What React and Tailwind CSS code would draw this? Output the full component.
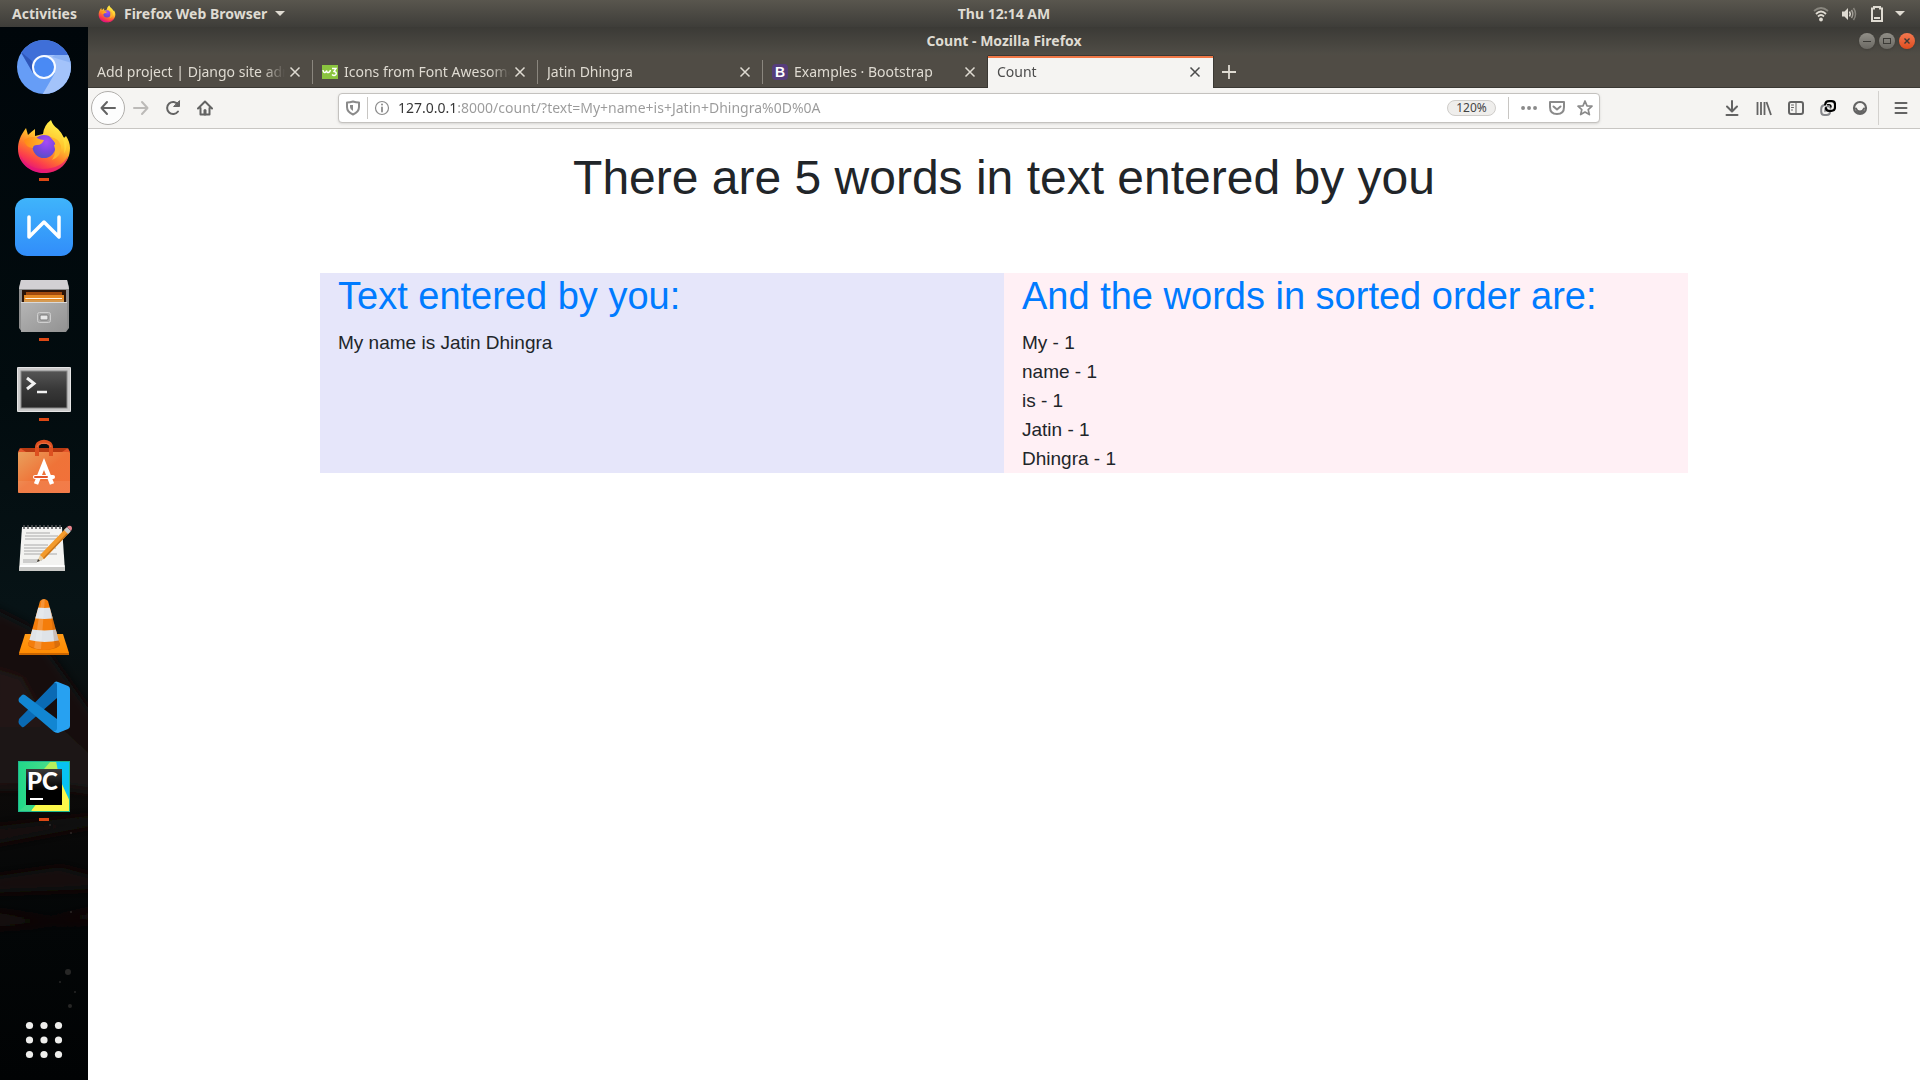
import React from "react";

const tabs = [
  { title: "Add project | Django site admin" },
  { title: "Icons from Font Awesome 5", icon: "w3" },
  { title: "Jatin Dhingra" },
  { title: "Examples · Bootstrap", icon: "bootstrap" },
  { title: "Count", active: true },
];

const words = ["My", "name", "is", "Jatin", "Dhingra"];

function FirefoxArt({ id }) {
  return (
    <g>
      <defs>
        <linearGradient id={id + "a"} x1="0.8" y1="0.1" x2="0.35" y2="1">
          <stop offset="0" stopColor="#fff04a" />
          <stop offset="0.35" stopColor="#ffc42e" />
          <stop offset="0.6" stopColor="#ff7a2b" />
          <stop offset="0.82" stopColor="#fb3a4f" />
          <stop offset="1" stopColor="#e0147f" />
        </linearGradient>
        <radialGradient id={id + "b"} cx="0.6" cy="0.3" r="0.7">
          <stop offset="0" stopColor="#a64bf5" />
          <stop offset="0.6" stopColor="#7b45e0" />
          <stop offset="1" stopColor="#5a50c8" />
        </radialGradient>
        <linearGradient id={id + "c"} x1="0" y1="0" x2="1" y2="0">
          <stop offset="0" stopColor="#ff8a16" />
          <stop offset="1" stopColor="#ffb52b" />
        </linearGradient>
      </defs>
      <path
        d="M18 42C18 35 20 29 26 21L28 28Q31 25 35 22V29L43 27Q44 18 51 13Q53 19 58 22Q62 26 64 31L66 29Q70 35 70 41C70 56 58 66 44 66S18 56 18 42z"
        fill={`url(#${id}a)`}
      />
      <path d="M20 48c4 8 12 14 23 14 12 0 21-5 25-13-2 11-12 17-24 17S22 58 20 48z" fill="#e5127b" opacity=".6" />
      <path d="M59 24Q66 34 64 47Q68 40 66 30L64 31z" fill="#ffe23e" opacity=".6" />
      <circle cx="44" cy="39.500" r="11.500" fill={`url(#${id}b)`} />
      <path d="M50 30Q59 31 61 39Q62 49 52 53Q57 46 54 38L56 37Q53 33 50 30z" fill="#ffb22c" />
      <path d="M24 33Q31 28 37 31Q40 33 44 33Q42 38 37 38Q33 38 33 41Q25 40 24 33z" fill={`url(#${id}c)`} />
    </g>
  );
}

const dockApps = [
  {
    name: "Chromium",
    art: (
      <g>
        <clipPath id="crc"><circle cx="44" cy="40" r="27" /></clipPath>
        <g clipPath="url(#crc)">
          <rect x="17" y="13" width="54" height="54" fill="#669df6" />
          <path d="M10 10H78V28H44L33 46 20 24z" fill="#3f6fd8" />
          <path d="M44 28H75V70H41L55 46z" fill="#a3c3fa" />
          <path d="M55 28H72V36L52 30z" fill="#7ba6f0" opacity=".6" />
          <path d="M21 25L33 46 32 34z" fill="#2f57b8" />
        </g>
        <circle cx="44" cy="40" r="11" fill="#4a8af4" stroke="#f8fbff" strokeWidth="2" />
      </g>
    ),
  },
  { name: "Firefox Web Browser", running: true, art: <FirefoxArt id="dockff" /> },
  {
    name: "WPS Writer",
    art: (
      <g>
        <linearGradient id="wps" x1="0" y1="0" x2="0" y2="1">
          <stop offset="0" stopColor="#3fb4fb" /><stop offset="1" stopColor="#318dfa" />
        </linearGradient>
        <rect x="15" y="11" width="58" height="58" rx="12" fill="url(#wps)" />
        <path d="M29 30V50L44 35L59 50V30" fill="none" stroke="#fff" strokeWidth="3.500" strokeLinecap="round" strokeLinejoin="round" />
      </g>
    ),
  },
  {
    name: "Files",
    running: true,
    art: (
      <g>
        <linearGradient id="fil" x1="0" y1="0" x2="1" y2="1">
          <stop offset="0" stopColor="#b5b5b5" /><stop offset="1" stopColor="#929292" />
        </linearGradient>
        <path d="M21 13H67L69 20V61L66 65H22L19 61V20z" fill="#8e8e8e" />
        <path d="M21 13H67L69 22H19z" fill="#d2d0d3" />
        <rect x="22" y="23" width="44" height="14" fill="#2b1508" />
        <path d="M26 25H62V28H26z" fill="#a24a0c" />
        <path d="M24 28H64V36H24z" fill="#e58a25" />
        <path d="M25 31H50V32H25z" fill="#ffd08a" />
        <path d="M26 31H62V32H26z" fill="#fff4e2" />
        <path d="M24 33H64V36H24z" fill="#d59a51" />
        <path d="M21 35H67V62L64 65H21z" fill="url(#fil)" />
        <path d="M21 35H67V36H21z" fill="#d9d9d9" />
        <rect x="37.500" y="45.500" width="13" height="10" rx="2" fill="#a8a8a8" stroke="#cfcfcf" />
        <rect x="40" y="48" width="8" height="5" rx="1" fill="#e8e8e8" stroke="#777" />
      </g>
    ),
  },
  {
    name: "Terminal",
    running: true,
    art: (
      <g>
        <linearGradient id="ter" x1="0" y1="0" x2="0" y2="1">
          <stop offset="0" stopColor="#555" /><stop offset="0.5" stopColor="#383838" /><stop offset="1" stopColor="#282828" />
        </linearGradient>
        <rect x="17" y="20" width="54" height="45" rx="1" fill="#c9c9c9" />
        <rect x="17.500" y="20.500" width="53" height="44" rx="1" fill="none" stroke="#e6e6e6" />
        <rect x="21" y="24" width="46" height="37" fill="url(#ter)" stroke="#8a8a8a" />
        <path d="M27 31L34 36.500L27 42" fill="none" stroke="#f2f2f2" strokeWidth="3" />
        <path d="M37 45H47" stroke="#f2f2f2" strokeWidth="2.500" />
      </g>
    ),
  },
  {
    name: "Ubuntu Software",
    art: (
      <g>
        <linearGradient id="bag" x1="0" y1="0" x2="1" y2="1">
          <stop offset="0" stopColor="#e9a05c" /><stop offset="0.5" stopColor="#ef7338" /><stop offset="1" stopColor="#f2703a" />
        </linearGradient>
        <path d="M21 21H67L70 26H18z" fill="#b83a12" />
        <path d="M20 21L26 25H18zM68 21L62 25H70z" fill="#e4562a" />
        <rect x="18" y="25" width="52" height="41" rx="1" fill="url(#bag)" />
        <path d="M18 54H70V66H18z" fill="#fff" opacity=".08" />
        <path d="M37 29V20C37 13 51 13 51 20V29" fill="none" stroke="#dd5020" strokeWidth="4" />
        <path d="M37 20C38 15 50 15 51 20" fill="none" stroke="#ec774a" strokeWidth="1" />
        <path d="M36 57L44 37L52 57" fill="none" stroke="#fff" strokeWidth="4.500" />
        <rect x="33" y="48" width="22" height="4" rx="2" fill="#fff" />
        <rect x="34" y="49" width="14" height="2" rx="1" fill="#e4562a" />
      </g>
    ),
  },
  {
    name: "Text Editor",
    art: (
      <g>
        <path d="M22 20H62L65 64H19z" fill="#f3f3f1" />
        <path d="M19 64H65V59H19.500z" fill="#c9c9c7" />
        <path d="M20 58H64.500V60H20z" fill="#fff" />
        <path d="M24 18V22M28 18V22M32 18V22M36 18V22M40 18V22M44 18V22M48 18V22M52 18V22M56 18V22M60 18V22" stroke="#55575a" strokeWidth="1.500" />
        <path d="M26 26H50M25 29H58M25 32H57M24 38H48M24 41H56M24 44H50M24 47H57M23 53H42M23 55H37" stroke="#a9a9a9" strokeWidth="1" />
        <path d="M37 55L40 48L44 52z" fill="#e8cda0" />
        <path d="M37 55L38 52L40 54z" fill="#333" />
        <path d="M40 48L66 21L70 25L44 52z" fill="#f39a2b" />
        <path d="M43 51L69 24L70 25L44 52z" fill="#c8741a" />
        <path d="M64 23L67 20L71 24L68 27z" fill="#c9cbcd" />
        <path d="M67 20Q69 18 71 19Q73 21 71 24z" fill="#e7848c" />
      </g>
    ),
  },
  {
    name: "VLC media player",
    art: (
      <g>
        <linearGradient id="vlb" x1="0" y1="0" x2="0" y2="1">
          <stop offset="0" stopColor="#ff9a17" /><stop offset="1" stopColor="#ff8a00" />
        </linearGradient>
        <clipPath id="cone"><path d="M40 14Q44 10 48 14L60 58Q44 68 28 58z" /></clipPath>
        <path d="M25 47H63L69 66V68H19V66z" fill="url(#vlb)" />
        <path d="M19 66H69V68H19z" fill="#c96500" />
        <ellipse cx="44" cy="57" rx="16" ry="6" fill="#d76a05" />
        <g clipPath="url(#cone)">
          <rect x="25" y="10" width="40" height="55" fill="#f47d0b" />
          <path d="M25 19Q44 23 65 19V30Q44 34 25 30z" fill="#dfe3e8" />
          <path d="M25 41Q44 46 65 41V52Q44 58 25 52z" fill="#dfe3e8" />
          <path d="M49 10L65 62H55z" fill="#7b3c12" opacity=".22" />
          <path d="M42 10H45L41 62H34z" fill="#fff" opacity=".18" />
        </g>
      </g>
    ),
  },
  {
    name: "Visual Studio Code",
    art: (
      <g>
        <path d="M19 57L22 60Q23 61 25 59L57 31V15Q55 15 54 16L19 52Q18 55 19 57z" fill="#0a6ab4" />
        <path d="M19 31L22 28Q23 27 25 28L57 52V65Q55 66 53 64L19 35Q18 33 19 31z" fill="#1286d2" />
        <path d="M55 15Q56 14 58 15L68 19Q70 20 70 22V59Q70 61 68 62L58 66Q56 66 53 64Q56 65 57 62V18Q57 15 54 16z" fill="#27a1f1" />
      </g>
    ),
  },
  {
    name: "PyCharm",
    running: true,
    art: (
      <g>
        <linearGradient id="pyc" x1="0" y1="0" x2="1" y2="0">
          <stop offset="0" stopColor="#21d789" /><stop offset="1" stopColor="#5fe08a" />
        </linearGradient>
        <linearGradient id="pyk" x1="0" y1="0" x2="0" y2="1">
          <stop offset="0" stopColor="#3a3a3a" /><stop offset="0.6" stopColor="#000" />
        </linearGradient>
        <rect x="18" y="14" width="52" height="51" fill="url(#pyc)" />
        <path d="M44 22L51 14H57L62 40z" fill="#b5ef5c" />
        <path d="M56 14H70V54L60 34z" fill="#07c3f2" />
        <path d="M61 35L70 55V65H30L42 50z" fill="#fcf84a" />
        <path d="M18 65L35 50L31 65z" fill="#3bd98b" />
        <rect x="18.500" y="14.500" width="51" height="50" fill="none" stroke="#1fb58d" />
        <rect x="26" y="22" width="36" height="36" fill="url(#pyk)" />
        <rect x="30" y="51" width="13" height="2" fill="#fff" />
        <text x="27" y="43" fontFamily="Lato, sans-serif" fontWeight="900" fontSize="24" fill="#fff">PC</text>
      </g>
    ),
  },
];

function Dock() {
  return (
    <nav aria-label="Dock" className="relative flex w-[88px] shrink-0 flex-col bg-[#01070a]">
      <svg className="absolute inset-0 h-full w-full" viewBox="0 0 88 1053" preserveAspectRatio="none" aria-hidden="true">
        <defs>
          <linearGradient id="sea" x1="0" y1="0" x2="0" y2="1">
            <stop offset="0" stopColor="#00060a" />
            <stop offset="0.35" stopColor="#020c0f" />
            <stop offset="0.55" stopColor="#071316" />
            <stop offset="0.72" stopColor="#0c0a09" />
            <stop offset="0.85" stopColor="#030607" />
            <stop offset="1" stopColor="#010304" />
          </linearGradient>
          <filter id="soft" x="-20%" width="140%"><feGaussianBlur stdDeviation="6" /></filter>
        </defs>
        <rect width="88" height="1053" fill="url(#sea)" />
        <g filter="url(#soft)">
          <path d="M-10 580L30 600L98 695V760H-10z" fill="#17110d" />
          <path d="M-10 640L22 650L60 720L20 760H-10z" fill="#221812" />
          <path d="M-10 700H60L98 735V765L-10 750z" fill="#1d1713" />
          <path d="M-10 800L98 788V798L-10 818zM-10 850L60 840L98 850V862L-10 866z" fill="#170e08" />
          <path d="M-10 885L50 893L98 883V893L-10 900z" fill="#1c110a" />
        </g>
        <g fill="#5e5a57" opacity=".4">
          <circle cx="50" cy="798" r="1" /><circle cx="71" cy="806" r="1" /><circle cx="71" cy="885" r="1" />
          <circle cx="68" cy="945" r="3" /><circle cx="60" cy="955" r="1" /><circle cx="75" cy="965" r="1" /><circle cx="70" cy="979" r="2" />
        </g>
      </svg>
      {dockApps.map((app) => (
        <button key={app.name} type="button" aria-label={app.name} className="relative h-20 w-full">
          <svg className="h-20 w-[88px]" viewBox="0 0 88 80" aria-hidden="true">{app.art}</svg>
          {app.running && <span className="absolute bottom-1.5 left-1/2 h-[3px] w-2.5 -translate-x-1/2 bg-[#dd4814]" />}
        </button>
      ))}
      <button type="button" aria-label="Show Applications" className="relative mt-auto h-20 w-full">
        <svg className="h-20 w-[88px]" viewBox="0 0 88 80" fill="#eeeeec" aria-hidden="true">
          {[25.5, 40, 54.5].map((y) => [29.5, 44, 58.5].map((x) => <circle key={x + "-" + y} cx={x} cy={y} r="3.600" />))}
        </svg>
      </button>
    </nav>
  );
}

function TopBar() {
  return (
    <header className="flex h-[27px] items-center bg-linear-to-b from-[#59564e] to-[#3e3d39] text-sm font-bold text-[#dfdbd2]">
      <button type="button" className="w-[88px] shrink-0 pl-3 text-left">Activities</button>
      <div className="grid min-w-0 flex-1 grid-cols-[1fr_auto_1fr] items-center">
        <button type="button" className="flex items-center gap-2 pl-2.5">
          <svg className="size-[18px]" viewBox="16 12 56 56" aria-hidden="true"><FirefoxArt id="topff" /></svg>
          Firefox Web Browser
          <svg className="h-[5px] w-[10px]" viewBox="0 0 10 5" aria-hidden="true"><path d="M0 0H10L5 5z" fill="currentColor" /></svg>
        </button>
        <button type="button">Thu 12:14 AM</button>
        <button type="button" aria-label="System menu" className="flex items-center justify-end gap-2.5 pr-[15px]">
          <span className="flex gap-3">
            <svg className="size-4" viewBox="0 0 16 16" fill="none" stroke="currentColor" strokeWidth="1.800" aria-hidden="true">
              <path d="M1 5Q8-1 15 5" opacity=".4" /><path d="M3 8Q8 3 13 8" /><path d="M5 10.500Q8 7.500 11 10.500" /><circle cx="8" cy="13.500" r="1.900" fill="currentColor" stroke="none" />
            </svg>
            <svg className="size-4" viewBox="0 0 16 16" fill="none" stroke="currentColor" strokeWidth="1.500" aria-hidden="true">
              <path d="M1 5.500H3.500L7 2V14L3.500 10.500H1z" fill="currentColor" stroke="none" /><path d="M8.500 5.500Q10 8 8.500 10.500" /><path d="M10.500 4Q13 8 10.500 12" opacity=".6" /><path d="M12.500 2Q16.500 8 12.500 14" opacity=".4" />
            </svg>
            <svg className="size-4" viewBox="0 0 16 16" aria-hidden="true">
              <path d="M3 2.500H5V1H11V2.500H13V15H3z" fill="none" stroke="currentColor" strokeWidth="2" /><path d="M5 11H11V13H5z" fill="currentColor" />
            </svg>
          </span>
          <svg className="h-[5px] w-[10px]" viewBox="0 0 10 5" aria-hidden="true"><path d="M0 0H10L5 5z" fill="currentColor" /></svg>
        </button>
      </div>
    </header>
  );
}

function TitleBar() {
  return (
    <div className="grid h-7 grid-cols-[1fr_auto_1fr] items-center bg-linear-to-b from-[#3b3a36] to-[#504d46] text-sm font-bold text-[#dfdbd2]">
      <span />
      <h1>Count - Mozilla Firefox</h1>
      <div className="flex justify-end gap-1 pr-[5px] text-[#3b3a36]">
        <button type="button" aria-label="Minimize" className="size-4 rounded-full bg-linear-to-b from-[#918f88] to-[#6b6963] shadow">
          <svg className="size-4" viewBox="0 0 16 16"><path d="M4 8.500H12" stroke="currentColor" /></svg>
        </button>
        <button type="button" aria-label="Maximize" className="size-4 rounded-full bg-linear-to-b from-[#918f88] to-[#6b6963] shadow">
          <svg className="size-4" viewBox="0 0 16 16"><rect x="4.500" y="5.500" width="7" height="5" fill="none" stroke="currentColor" /></svg>
        </button>
        <button type="button" aria-label="Close" className="size-4 rounded-full bg-linear-to-b from-[#f3784f] to-[#de4c1c] shadow">
          <svg className="size-4" viewBox="0 0 16 16"><path d="M5.500 5.500L10.500 10.500M10.500 5.500L5.500 10.500" stroke="currentColor" strokeWidth="1.400" /></svg>
        </button>
      </div>
    </div>
  );
}

function TabIcon({ kind }) {
  if (kind === "w3")
    return (
      <svg className="size-4 shrink-0" viewBox="0 0 16 16" aria-hidden="true">
        <rect y="1" width="16" height="14" fill="#8ac43f" />
        <path d="M1 6Q1.500 9 3 8.500Q4.500 8 4.500 6.500Q5 9 6.500 8.500Q8 8 8.500 6M10 4.500H14L12 7.500Q15 8 14 10.500Q12 12.500 10 10.500" fill="none" stroke="#fff" strokeWidth="1.400" />
      </svg>
    );
  return <span className="flex size-4 shrink-0 items-center justify-center rounded-sm bg-[#563d7c] font-['Liberation_Sans',sans-serif] text-sm leading-none font-bold text-white">B</span>;
}

function TabStrip() {
  return (
    <div className="flex h-[33px] items-stretch bg-[#504c45] shadow-[inset_0_-1px_#3a3833]">
      {tabs.map((tab, i) => (
        <div
          key={tab.title}
          className={
            tab.active
              ? "mt-px flex w-[225px] items-center border-t-2 border-[#f07746] bg-[#f5f4f2] pr-2.5 pb-0.5 pl-[9px] text-[#4c4c4c] shadow-[-1px_0_#3a3833,1px_0_#3a3833,0_-1px_#3a3833]"
              : "flex w-[225px] items-center pl-[9px] text-[#dfdbd2]"
          }
        >
          <button type="button" className="flex min-w-0 flex-1 items-center gap-1.5 text-left text-sm">
            {tab.icon && <TabIcon kind={tab.icon} />}
            <span className="min-w-0 flex-1 overflow-hidden whitespace-nowrap mask-r-from-88% mask-r-to-100%">{tab.title}</span>
          </button>
          <button type="button" aria-label={"Close " + tab.title} className="ml-0.5">
            <svg className="size-4" viewBox="0 0 16 16"><path d="M3.500 3.500L12.500 12.500M12.500 3.500L3.500 12.500" stroke="currentColor" strokeWidth="1.500" /></svg>
          </button>
          {!tab.active && <span className={i === 3 ? "ml-[9px] w-px" : "ml-[9px] h-6 w-px bg-[#8a867e]"} />}
        </div>
      ))}
      <button type="button" aria-label="New tab" className="px-2 text-[#dfdbd2]">
        <svg className="size-4" viewBox="0 0 16 16"><path d="M8 1V15M1 8H15" stroke="currentColor" strokeWidth="1.800" /></svg>
      </button>
    </div>
  );
}

function Icon({ children, label, className = "" }) {
  return (
    <button type="button" aria-label={label} className={"flex items-center justify-center " + className}>
      <svg className="size-4 shrink-0" viewBox="0 0 16 16" fill="none" stroke="currentColor" strokeWidth="2" strokeLinecap="round" strokeLinejoin="round" aria-hidden="true">
        {children}
      </svg>
    </button>
  );
}

function Toolbar() {
  return (
    <div className="flex h-[41px] items-center border-b border-[#c8c6c3] bg-[#f5f4f2] text-[#636363]">
      <div className="flex items-center pl-[3px]">
        <Icon label="Back" className="size-[34px] rounded-full border border-[#b0aeab] bg-[#fdfdfd]"><path d="M15 8H1.500M7 2L1.500 8L7 14" /></Icon>
        <Icon label="Forward" className="size-8 text-[#bcbab8]"><path d="M1 8H14.500M9 2L14.500 8L9 14" /></Icon>
        <Icon label="Reload" className="size-8"><path d="M13 11.500A6 6 0 1 1 13 4.500" /><path d="M14.500 1V6.500H9z" fill="currentColor" strokeWidth="1" /></Icon>
        <Icon label="Home" className="size-8"><path d="M1 8.500L8 1.500L15 8.500M3.500 8V14.500H12.500V8" /><path d="M8 14V10.500" strokeWidth="3" /></Icon>
      </div>
      <div className="flex min-w-0 flex-1 justify-center pr-[116px] pl-[117px]">
        <form className="flex h-[30px] w-full items-center rounded-sm border border-[#c4c2bf] bg-white pr-1.5 pl-1.5 text-[#8a8a8a] shadow-sm">
          <Icon label="Tracking protection" className="mr-1.5 size-4">
            <path d="M8 1.500Q11 2.500 14 2.500V7Q14 12 8 14.500Q2 12 2 7V2.500Q5 2.500 8 1.500z" /><path d="M8 5V11Q5 9.500 5 7V5z" fill="currentColor" strokeWidth="0" />
          </Icon>
          <span className="h-[22px] w-px bg-[#c8c6c3]" />
          <Icon label="Site information" className="mr-2 ml-1.5 size-4">
            <circle cx="8" cy="8" r="6.500" strokeWidth="1.200" /><path d="M8 7.500V11.500" strokeWidth="1.800" /><path d="M8 4.500V4.600" strokeWidth="2" />
          </Icon>
          <input
            type="text"
            aria-label="Address"
            defaultValue="127.0.0.1:8000/count/?text=My+name+is+Jatin+Dhingra%0D%0A"
            className="min-w-0 flex-1 bg-[linear-gradient(to_right,#333_60px,#9a9a9a_60px)] bg-clip-text text-sm text-transparent outline-none"
          />
          <button type="button" className="flex h-4 w-[49px] items-center justify-center rounded-full border border-[#cfcdca] bg-[#efeeec] text-xs text-[#444]">120%</button>
          <span className="mr-3 ml-3 h-[22px] w-px bg-[#c8c6c3]" />
          <Icon label="Page actions" className="mr-3 size-4"><path d="M2 8H2.100M8 8H8.100M14 8H14.100" strokeWidth="3.800" /></Icon>
          <Icon label="Save to Pocket" className="mr-3 size-4"><path d="M1 2H15V7Q15 14 8 14Q1 14 1 7z" /><path d="M4.500 6.500L8 9.500L11.500 6.500" /></Icon>
          <Icon label="Bookmark" className="size-4"><path d="M8 1L10 5.800L15 6.200L11.200 9.600L12.400 14.600L8 12L3.600 14.600L4.800 9.600L1 6.200L6 5.800z" strokeWidth="1.700" /></Icon>
        </form>
      </div>
      <div className="flex items-center">
        <Icon label="Downloads" className="size-8"><path d="M8 1V11M3 6.500L8 11.500L13 6.500M2.500 15H13.500" /></Icon>
        <Icon label="Library" className="size-8"><path d="M1.500 2V15M5 2V15M8.500 2V15M10.500 2L15 15" strokeLinecap="butt" strokeWidth="1.800" /></Icon>
        <Icon label="Sidebars" className="size-8"><rect x="1" y="2" width="14" height="12" rx="2" /><path d="M8 2V14" strokeWidth="1" /><path d="M3.500 5H5.500M3.500 7.500H5.500M3.500 10H4.500" strokeWidth="1" /></Icon>
        <Icon label="Extension" className="size-8">
          <path d="M4.500 5Q1.200 5.500 1.200 9V11.500Q1.200 15 4.500 15H6.500Q10 15 10 12" stroke="#85868a" />
          <path d="M5 11.500V9.500Q5 6.500 7.500 6.500Q10.500 6.500 10.500 8.500" stroke="#85868a" strokeWidth="1.500" />
          <path d="M5.200 4.500Q5.500 1.200 9 1.200H11.500Q15 1.200 15 4.500V7Q15 10.800 11.500 10.800H9Q6 10.800 6 8" stroke="#000" strokeWidth="2.200" />
          <path d="M7.500 4.800H9Q11 4.800 11 7" stroke="#000" strokeWidth="1.500" />
        </Icon>
        <Icon label="Account" className="size-8"><circle cx="8" cy="8" r="6" strokeWidth="2.200" /><path d="M4 8.500Q5 11.500 8 11.500T12 8.500" /><path d="M4.500 11.500Q8 14 11.500 11.500" strokeWidth="1.200" /></Icon>
        <span className="mr-1.5 ml-0.5 h-[34px] w-px bg-[#d3d1ce]" />
        <Icon label="Menu" className="mr-[3px] size-8"><path d="M2.500 3H13.500M2.500 8H13.500M2.500 13H13.500" /></Icon>
      </div>
    </div>
  );
}

function Page() {
  return (
    <main className="flex-1 bg-white font-['Liberation_Sans',Arial,sans-serif] text-[19px] leading-[29px] text-[#212529]">
      <h2 className="pt-5 pb-[66px] text-center text-5xl leading-[58px]">There are 5 words in text entered by you</h2>
      <div className="mx-auto grid max-w-[1368px] grid-cols-2">
        <section className="bg-[#e6e6fa] px-[18px]">
          <h3 className="mb-[9px] text-[38px] leading-[46px] text-[#007bff]">Text entered by you:</h3>
          <p>My name is Jatin Dhingra</p>
        </section>
        <section className="bg-[#fff0f5] px-[18px]">
          <h3 className="mb-[9px] text-[38px] leading-[46px] text-[#007bff]">And the words in sorted order are:</h3>
          <ul>
            {words.map((word) => <li key={word}>{word} - 1</li>)}
          </ul>
        </section>
      </div>
    </main>
  );
}

export default function App() {
  return (
    <div className="flex min-h-screen flex-col font-['Noto_Sans','Open_Sans',sans-serif]">
      <TopBar />
      <div className="flex flex-1">
        <Dock />
        <div className="flex min-w-0 flex-1 flex-col">
          <TitleBar />
          <TabStrip />
          <Toolbar />
          <Page />
        </div>
      </div>
    </div>
  );
}
